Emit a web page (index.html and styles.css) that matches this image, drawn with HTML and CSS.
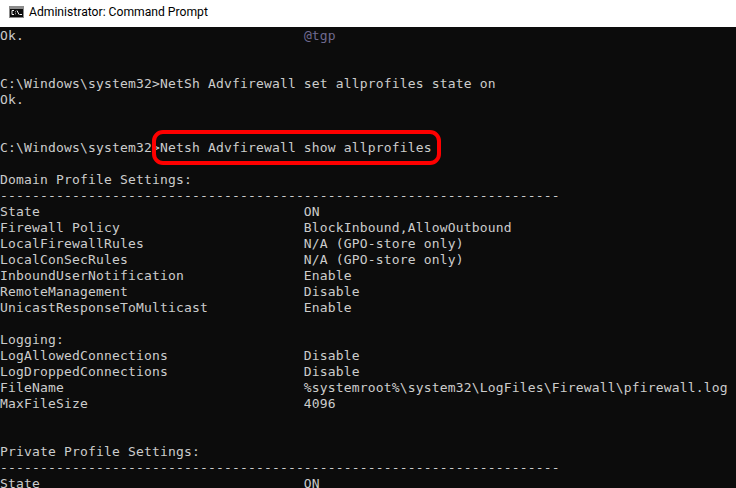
FILE: index.html
```html
<!DOCTYPE html>
<html lang="en">
<head>
<meta charset="utf-8">
<title>Administrator: Command Prompt</title>
<link rel="stylesheet" href="styles.css">
</head>
<body>
<div class="window">
<header class="titlebar">
<svg class="cmd-icon" width="15" height="12" viewBox="0 0 15 12" aria-hidden="true">
<rect width="15" height="12" fill="#8c8c8c"/>
<rect x="1" y="3" width="13" height="8" fill="#0c0c0c"/>
<path d="M5 4.5H3V8.5H5M6.5 5.5V6.2M6.5 7.5V8.2M8 4.5L10 8.5M10.5 8.5H13" fill="none" stroke="#f2f2f2" stroke-width="1"/>
</svg>
<span class="title">Administrator: Command Prompt</span>
</header>
<main class="console">
<pre class="output">Ok.                                   <span class="mark">@tgp</span>


C:\Windows\system32&gt;NetSh Advfirewall set allprofiles state on
Ok.


C:\Windows\system32&gt;Netsh Advfirewall show allprofiles

Domain Profile Settings:
----------------------------------------------------------------------
State                                 ON
Firewall Policy                       BlockInbound,AllowOutbound
LocalFirewallRules                    N/A (GPO-store only)
LocalConSecRules                      N/A (GPO-store only)
InboundUserNotification               Enable
RemoteManagement                      Disable
UnicastResponseToMulticast            Enable

Logging:
LogAllowedConnections                 Disable
LogDroppedConnections                 Disable
FileName                              %systemroot%\system32\LogFiles\Firewall\pfirewall.log
MaxFileSize                           4096


Private Profile Settings:
----------------------------------------------------------------------
State                                 ON</pre>
<div class="highlight"></div>
</main>
</div>
</body>
</html>
```
FILE: styles.css
```css
html, body {
  margin: 0;
  padding: 0;
  height: 100%;
  overflow: hidden;
}
.window {
  display: flex;
  flex-direction: column;
  height: 488px;
  background: #fff;
}
.titlebar {
  flex: 0 0 27px;
  box-sizing: border-box;
  display: flex;
  align-items: center;
  gap: 5px;
  padding: 0 0 3px 9px;
  background: #fff;
}
.cmd-icon {
  flex: none;
}
.title {
  font: 12.15px/16px Roboto, "Open Sans", sans-serif;
  color: #000;
}
.console {
  position: relative;
  flex: 1;
  background: #0c0c0c;
  overflow: hidden;
}
.output {
  margin: 0;
  padding-top: 1px;
  font: 13px/16px "DejaVu Sans Mono", monospace;
  letter-spacing: 0.17px;
  color: #cccccc;
}
.mark {
  color: #6f6a90;
}
.highlight {
  position: absolute;
  left: 152px;
  top: 103px;
  width: 289px;
  height: 35px;
  box-sizing: border-box;
  border: 4px solid #f00;
  border-radius: 11px;
}
```
